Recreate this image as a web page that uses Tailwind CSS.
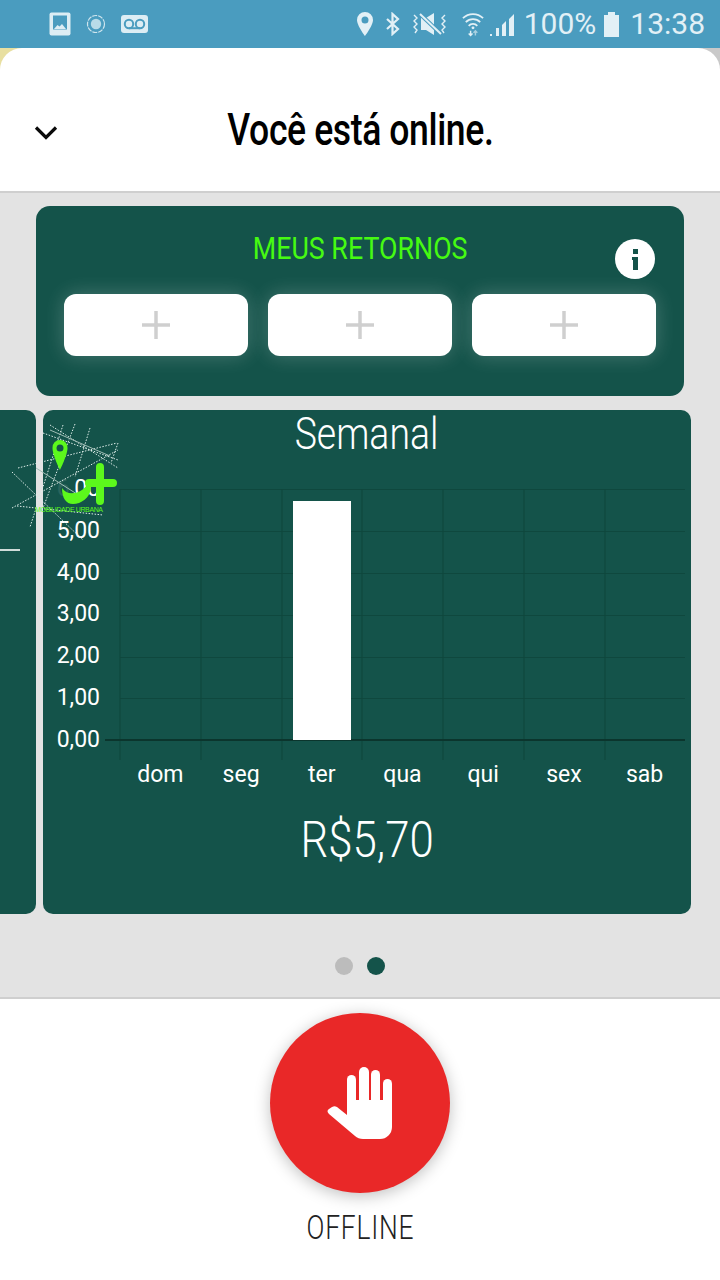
<!DOCTYPE html>
<html><head><meta charset="utf-8"><script src="https://cdn.jsdelivr.net/npm/@tailwindcss/browser@4"></script></head>
<body class="m-0">
<div class="relative w-[720px] h-[1280px] overflow-hidden bg-white flex flex-col font-['Roboto',sans-serif]">
  <!-- status bar -->
  <div class="h-[48px] shrink-0 bg-[#4a9cbf] flex items-center text-[#e2f0f6]">
    <div class="flex items-center pl-[49px] gap-[15px]">
      <svg width="22" height="24" viewBox="0 0 22 24"><rect x="0.5" y="0.5" width="21" height="23" rx="2" fill="#dcedf4"/><rect x="4" y="3.5" width="14" height="14" fill="#4a9cbf"/><path d="M5 17 l3.5-4 2 1.6 2.5-2.6 4 5z" fill="#dcedf4"/></svg>
      <svg width="20" height="20" viewBox="0 0 20 20"><circle cx="10" cy="10" r="8.5" fill="none" stroke="#cfe5ee" stroke-width="1.2" stroke-dasharray="5 1"/><circle cx="10" cy="10" r="5.2" fill="#b9dbe8"/></svg>
      <svg width="27" height="18" viewBox="0 0 27 18"><rect width="27" height="18" rx="3" fill="#dcedf4"/><circle cx="8" cy="9" r="4.2" fill="none" stroke="#4a9cbf" stroke-width="2"/><circle cx="19" cy="9" r="4.2" fill="none" stroke="#4a9cbf" stroke-width="2"/><path d="M8 13.2h11" stroke="#4a9cbf" stroke-width="2"/></svg>
    </div>
    <div class="ml-auto flex items-center pr-[15px]">
      <svg width="18" height="26" viewBox="0 0 18 26"><path fill-rule="evenodd" d="M9 1a8 8 0 0 1 8 8c0 5.500-8 16-8 16S1 14.500 1 9a8 8 0 0 1 8-8zm0 4.500a3.500 3.500 0 1 0 0 7 3.500 3.500 0 0 0 0-7z" fill="#e2f0f6"/></svg>
      <svg class="ml-[11px]" width="16" height="24" viewBox="0 0 16 24"><path d="M2 7l11 10-5.500 5V2L13 7 2 17" fill="none" stroke="#e2f0f6" stroke-width="2.200"/></svg>
      <svg class="ml-[10px]" width="37" height="28" viewBox="0 0 37 28"><path d="M3 5l3 3-3 3 3 3-3 3 3 3-2 3M34 5l-3 3 3 3-3 3 3 3-3 3 2 3" fill="none" stroke="#e2f0f6" stroke-width="1.400"/><path d="M10 8h5l8-5v22l-8-5h-5z" fill="#e2f0f6"/><path d="M9 4l21 20" stroke="#4a9cbf" stroke-width="4"/><path d="M9 4l21 20" stroke="#e2f0f6" stroke-width="2"/></svg>
      <svg class="ml-[13px]" width="24" height="26" viewBox="0 0 25 26"><path d="M2 7a15 15 0 0 1 21 0M5 11a10.500 10.500 0 0 1 15 0M8 15a6 6 0 0 1 9 0" fill="none" stroke="#e2f0f6" stroke-width="1.800"/><circle cx="12.500" cy="17" r="1.500" fill="#e2f0f6"/><path d="M10 20v5M8 23l2 2 2-2" fill="none" stroke="#e2f0f6" stroke-width="1.500"/><path d="M15 25v-5M13 22l2-2 2 2" fill="none" stroke="#a9d0e0" stroke-width="1.500"/></svg>
      <svg class="ml-[5px]" width="25" height="24" viewBox="0 0 25 24"><path d="M0 24h2v-2H0zM6 24h3v-8H6zM12 24h4V9l-4 4zM19 24h5V2l-5 5z" fill="#e2f0f6"/></svg>
      <span class="ml-[9px] text-[30px] leading-none">100%</span>
      <svg class="ml-[7px]" width="17" height="26" viewBox="0 0 17 26"><path d="M5 1h7v3h4v22H1V4h4z" fill="#e2f0f6"/></svg>
      <span class="ml-[10px] text-[30px] leading-none">13:38</span>
    </div>
  </div>
  <!-- corners behind sheet -->
  <div class="absolute left-0 top-[48px] w-[24px] h-[24px] bg-[#e8dfa0]"></div>
  <div class="absolute right-0 top-[48px] w-[24px] h-[24px] bg-[#c9c9c9]"></div>
  <!-- header -->
  <div class="relative h-[145px] shrink-0 bg-white rounded-t-[22px] border-b-2 border-[#cfcfcf] flex items-center justify-center pt-[19px]">
    <svg class="absolute left-[34px] top-[77px]" width="24" height="16" viewBox="0 0 24 16"><path d="M2 2.500l10 10 10-10" fill="none" stroke="#0a0a0a" stroke-width="3.200"/></svg>
    <span class="text-[45px] leading-none font-medium text-black tracking-[-0.5px] inline-block scale-x-[0.79] whitespace-nowrap">Você está online.</span>
  </div>
  <!-- main -->
  <div class="relative flex-1 bg-[#e3e3e3] overflow-hidden">
    <div class="ml-[36px] mt-[13px] w-[648px] h-[190px] rounded-[14px] bg-[#14534a] relative px-[28px] pt-[24px]">
      <div class="text-center text-[#46fa12] text-[32px] leading-[36px]"><span class="inline-block scale-x-[0.838] whitespace-nowrap">MEUS RETORNOS</span></div>
      <div class="absolute right-[29px] top-[33px] w-[40px] h-[40px] rounded-full bg-white flex items-center justify-center">
        <svg width="8" height="21" viewBox="0 0 8 21"><rect x="2" width="5" height="5" fill="#14534a"/><path d="M1 8h6v13H2V11H1z" fill="#14534a"/></svg>
      </div>
      <div class="flex gap-[20px] mt-[28px]">
        <div class="w-[184px] h-[62px] rounded-[12px] bg-white shadow-[0_0_20px_rgba(255,255,255,0.22)] flex items-center justify-center"><svg width="28" height="28" viewBox="0 0 28 28"><path d="M14 0v28M0 14h28" stroke="#cfcfcf" stroke-width="3.500"/></svg></div>
        <div class="w-[184px] h-[62px] rounded-[12px] bg-white shadow-[0_0_20px_rgba(255,255,255,0.22)] flex items-center justify-center"><svg width="28" height="28" viewBox="0 0 28 28"><path d="M14 0v28M0 14h28" stroke="#cfcfcf" stroke-width="3.500"/></svg></div>
        <div class="w-[184px] h-[62px] rounded-[12px] bg-white shadow-[0_0_20px_rgba(255,255,255,0.22)] flex items-center justify-center"><svg width="28" height="28" viewBox="0 0 28 28"><path d="M14 0v28M0 14h28" stroke="#cfcfcf" stroke-width="3.500"/></svg></div>
      </div>
    </div>
    <div class="flex mt-[14px] h-[504px]">
      <!-- previous card peeking in -->
      <div class="w-[36px] shrink-0 rounded-r-[10px] bg-[#14534a] relative">
        <div class="absolute left-0 top-[139px] w-[20px] h-[2px] bg-[#cfdcd9]"></div>
      </div>
      <!-- chart card -->
      <div class="ml-[7px] w-[648px] rounded-[10px] bg-[#14534a] text-white">
        <div class="text-center text-[44px] leading-[48px] font-light"><span class="inline-block scale-x-[0.85] whitespace-nowrap">Semanal</span></div>
        <div class="flex mt-[31px] h-[271px]">
          <div class="w-[60px] ml-[-3px] flex flex-col text-[23px] leading-[41.8px] text-right -mt-[21px] shrink-0">
            <span><span class="text-white/10">6,</span>00</span><span>5,00</span><span>4,00</span><span>3,00</span><span>2,00</span><span>1,00</span><span>0,00</span>
          </div>
          <svg class="shrink-0 ml-[3px]" width="585" height="271" viewBox="0 0 585 271">
            <g stroke="#0f483e" stroke-width="1.200" fill="none">
              <path d="M17 0.500H582M17 42.500H582M17 84.500H582M17 126.500H582M17 168.500H582M17 209.500H582"/>
              <path d="M17 0V271M98 0V271M179 0V271M259 0V271M340 0V271M421 0V271M502 0V271"/>
            </g>
            <path d="M2 251H582" stroke="#0b352d" stroke-width="2"/>
            <rect x="190" y="12" width="58" height="239" fill="#fff"/>
          </svg>
        </div>
        <div class="ml-[77px] w-[566px] grid grid-cols-7 text-center text-[23px] leading-[30px] pr-[1px]">
          <span>dom</span><span>seg</span><span>ter</span><span>qua</span><span>qui</span><span>sex</span><span>sab</span>
        </div>
        <div class="text-center text-[50px] leading-[56px] font-light mt-[22px]"><span class="inline-block scale-x-[0.875] whitespace-nowrap">R$5,70</span></div>
      </div>
    </div>
    <div class="flex justify-center gap-[14px] mt-[43px]">
      <span class="w-[18px] h-[18px] rounded-full bg-[#bcbcbc]"></span>
      <span class="w-[18px] h-[18px] rounded-full bg-[#14534a]"></span>
    </div>
    <!-- logo overlay -->
    <svg class="absolute left-[10px] top-[245px] overflow-visible" width="112" height="90" viewBox="0 0 112 90">
      <g stroke="#dfeeea" stroke-width="1" stroke-dasharray="1.500 1.500" fill="none">
        <path d="M33 -5L108 22M40 -13L108 30M8 30L107 5M2 70L108 12M2 34L73 102M7 68L93 77M53 -13L20 89M65 -14L33 70M80 -10L65 39M108 5L101 25"/>
      </g>
      <g stroke="#9fbdb5" stroke-width="1" fill="none"><path d="M40 -8L100 18M26 30L70 58"/></g>
      <path fill-rule="evenodd" d="M50 2a7.500 7.500 0 0 1 7.500 8c0 7-7.500 22-7.500 22s-7.500-15-7.500-22a7.500 7.500 0 0 1 7.500-8zm0 4.500a3.500 3.500 0 1 0 0 7 3.500 3.500 0 0 0 0-7z" fill="#5cf81c"/>
      <path d="M52 50C57 58 70 57 78 46L81 50C80 60 71 66 63 66C56 66 52 60 52 50z" fill="#5cf81c"/>
      <path d="M90 29v34M79 45h24" stroke="#5cf81c" stroke-width="8" stroke-linecap="round"/>
      <text x="25" y="74" font-size="7" fill="#5cf81c" font-family="Liberation Sans" textLength="68">MOBILIDADE URBANA</text>
    </svg>
  </div>
  <!-- footer -->
  <div class="h-[283px] shrink-0 bg-white border-t-2 border-[#cfcfcf] flex flex-col items-center pt-[14px]">
    <div class="w-[180px] h-[180px] rounded-full bg-[#e92828] shadow-[0_3px_16px_rgba(0,0,0,0.25)] flex items-center justify-center">
      <svg width="66" height="76" viewBox="0 0 66 76" fill="#fff"><rect x="20" y="10" width="9" height="34" rx="4.500"/><rect x="32" y="2" width="10" height="40" rx="5"/><rect x="44" y="5" width="9" height="40" rx="4.500"/><rect x="56" y="14" width="9" height="30" rx="4.500"/><path d="M20 35H65V62a12 12 0 0 1-12 12H36c-3 0-6-1-8-3L2 49c-2-2-2-4 0-5l3-2c2-1 3-1 5 0l10 8z"/></svg>
    </div>
    <div class="mt-[16px] text-[33px] leading-[38px] font-light text-[#222]"><span class="inline-block scale-x-[0.8] whitespace-nowrap tracking-[1px]">OFFLINE</span></div>
  </div>
</div>
</body></html>
